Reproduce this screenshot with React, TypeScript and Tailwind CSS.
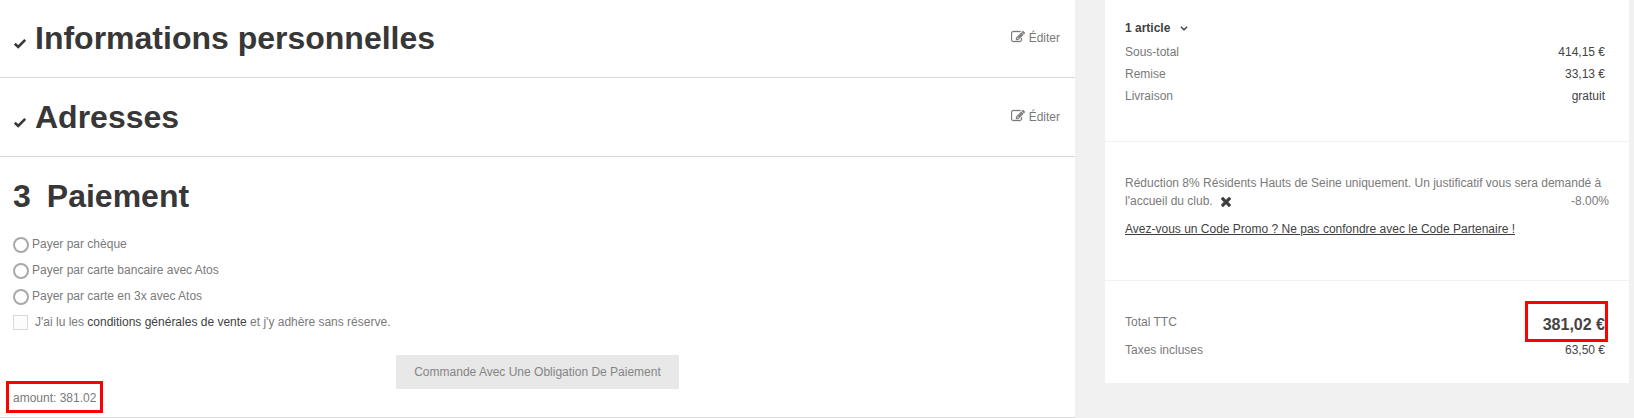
import type { ReactNode } from 'react';

function CheckIcon() {
  return (
    <svg viewBox="0 0 14 14" className="h-3.5 w-3.5 shrink-0" fill="none" stroke="currentColor" strokeWidth="2.6" aria-hidden="true">
      <path d="M1.8 8.800 5.2 12 12.200 4.800" />
    </svg>
  );
}

function ChevronIcon() {
  return (
    <svg viewBox="0 0 8 5" className="h-[5px] w-2" fill="none" stroke="currentColor" strokeWidth="1.4" aria-hidden="true">
      <path d="M0.9 0.8 4 3.700 7.1 0.8" />
    </svg>
  );
}

function EditIcon() {
  return (
    <svg viewBox="0 0 1792 1792" className="mt-px h-3.5 w-3.5" fill="currentColor" stroke="currentColor" strokeWidth="40" aria-hidden="true">
      <path d="M888 1184l116-116-152-152-116 116v56h96v96h56zm440-720q-16-16-33 1l-350 350q-17 17-1 33t33-1l350-350q17-17 1-33zm80 594v190q0 119-84.500 203.500t-203.500 84.500h-832q-119 0-203.500-84.500t-84.500-203.500v-832q0-119 84.500-203.500t203.500-84.500h832q63 0 117 25 15 7 18 23 3 17-9 29l-49 49q-14 14-32 8-23-6-45-6h-832q-66 0-113 47t-47 113v832q0 66 47 113t113 47h832q66 0 113-47t47-113v-126q0-13 9-22l64-64q15-15 35-7t20 29zm-96-738l288 288-672 672h-288v-288zm444 132l-92 92-288-288 92-92q28-28 68-28t68 28l152 152q28 28 28 68t-28 68z" />
    </svg>
  );
}

function CrossIcon() {
  return (
    <svg viewBox="300 370 1190 1190" className="h-2.5 w-2.5" fill="currentColor" aria-hidden="true">
      <path d="M1490 1322q0 40-28 68l-136 136q-28 28-68 28t-68-28l-294-294-294 294q-28 28-68 28t-68-28l-136-136q-28-28-28-68t28-68l294-294-294-294q-28-28-28-68t28-68l136-136q28-28 68-28t68 28l294 294 294-294q28-28 68-28t68 28l136 136q28 28 28 68t-28 68l-294 294 294 294q28 28 28 68z" />
    </svg>
  );
}

const headingClass = 'text-[32px] leading-[38px] font-bold text-[#373737]';

function DoneStep({ title }: { title: string }) {
  return (
    <section className="flex items-center justify-between border-b border-[#d8d8d8] py-5 pr-[15px] pl-[13px] first:pt-[19px]">
      <h1 className={`flex items-baseline gap-2 ${headingClass}`}>
        <CheckIcon />
        {title}
      </h1>
      <a href="#edit" className="flex items-start gap-1">
        <EditIcon />
        Éditer
      </a>
    </section>
  );
}

function PaymentOption({ label }: { label: string }) {
  return (
    <label className="flex items-center gap-[3px]">
      <input type="radio" name="payment" className="mt-0.5 h-4 w-4 appearance-none rounded-full border-2 border-[#a9a9a9] bg-white checked:bg-[#a9a9a9]" />
      {label}
    </label>
  );
}

function Line({ label, children }: { label: string; children: ReactNode }) {
  return (
    <div className="flex justify-between">
      <span>{label}</span>
      <span className="text-[#444444]">{children}</span>
    </div>
  );
}

export default function App() {
  return (
    <div className="grid min-h-screen grid-cols-[minmax(0,1075fr)_minmax(0,524fr)] items-start gap-[30px] bg-[#f1f1f1] pr-[5px] font-['Liberation_Sans',Arial,sans-serif] text-[12px] leading-[18px] text-[#7a7a7a]">
      <main className="bg-white">
        <DoneStep title="Informations personnelles" />
        <DoneStep title="Adresses" />
        <section className="border-b border-[#d8d8d8] px-[13px] pt-5 pb-2.5">
          <h1 className={`flex gap-4 ${headingClass}`}>
            <span>3</span>
            Paiement
          </h1>
          <form className="mt-5 flex flex-col">
            <div className="flex flex-col items-start gap-2">
              <PaymentOption label="Payer par chèque" />
              <PaymentOption label="Payer par carte bancaire avec Atos" />
              <PaymentOption label="Payer par carte en 3x avec Atos" />
              <div className="flex items-center gap-[7px]">
                <input id="terms" type="checkbox" className="h-[15px] w-[15px] appearance-none border border-[#d8d8d8] bg-[#fcfcfc] checked:bg-[#a9a9a9]" />
                <label htmlFor="terms">
                  J'ai lu les <a href="#terms-of-sale" className="text-[#3f3f3f]">conditions générales de vente</a> et j'y adhère sans réserve.
                </label>
              </div>
            </div>
            <button type="button" className="mt-6 self-center bg-[#e8e8e8] px-[18px] py-2 text-[#858585]">
              Commande Avec Une Obligation De Paiement
            </button>
          </form>
          <div className="relative w-fit">
            amount: 381.02
            <span className="pointer-events-none absolute -inset-x-[7px] -top-2 -bottom-1.5 border-3 border-[#ff0000]" />
          </div>
        </section>
      </main>

      <aside className="bg-white">
        <section className="border-b border-[#f1f1f1] px-5 pt-[19px] pb-9">
          <button type="button" className="flex items-center gap-2.5 font-bold text-[#3f3f3f]">
            1 article
            <ChevronIcon />
          </button>
          <div className="mt-1.5 flex flex-col gap-1 pr-1">
            <Line label="Sous-total">414,15 €</Line>
            <Line label="Remise">33,13 €</Line>
            <Line label="Livraison">gratuit</Line>
          </div>
        </section>
        <section className="border-b border-[#f1f1f1] px-5 pt-8 pb-[42px]">
          <p>
            Réduction 8% Résidents Hauts de Seine uniquement. Un justificatif vous sera demandé à l'accueil du club.
            <button type="button" aria-label="Supprimer" className="ml-2 inline-flex align-middle text-[#3f3f3f]">
              <CrossIcon />
            </button>
            <span className="float-right">-8.00%</span>
          </p>
          <a href="#promo" className="mt-2.5 block text-[#3f3f3f] underline">
            Avez-vous un Code Promo ? Ne pas confondre avec le Code Partenaire !
          </a>
        </section>
        <section className="flex flex-col gap-1 pt-8 pr-6 pb-6 pl-5">
          <div className="flex items-start justify-between">
            <span>Total TTC</span>
            <strong className="relative text-[16px] leading-6 text-[#444444]">
              381,02 €
              <span className="pointer-events-none absolute -top-3 -right-[3px] -bottom-[5px] -left-[18px] border-3 border-[#ff0000]" />
            </strong>
          </div>
          <Line label="Taxes incluses">63,50 €</Line>
        </section>
      </aside>
    </div>
  );
}
